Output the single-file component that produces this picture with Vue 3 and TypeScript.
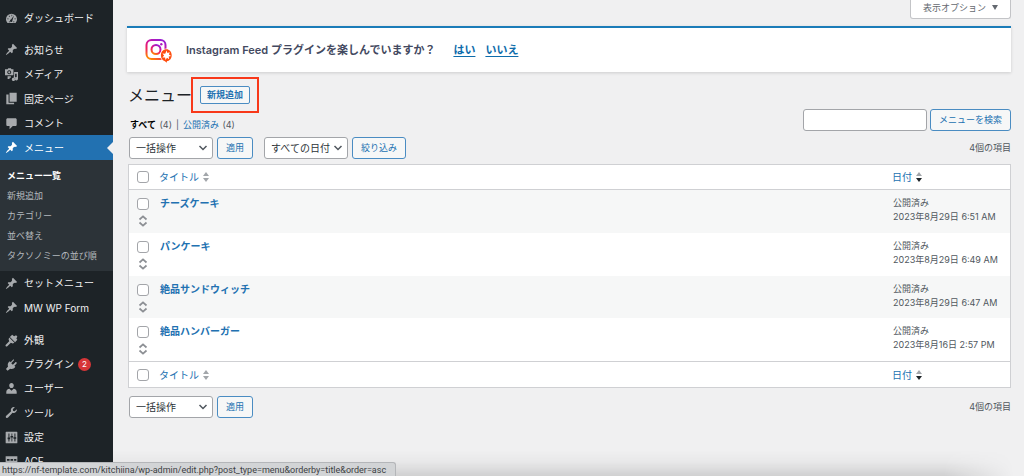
<script setup lang="ts">
import { ref } from 'vue'

type IconName = 'dashboard' | 'pin' | 'media' | 'pages' | 'comment' | 'brush' | 'plug' | 'user' | 'wrench' | 'sliders' | 'grid'
interface MenuItem { label: string; icon: IconName; current?: boolean; badge?: number }
interface Post { id: number; title: string; date: string }

const icons: Record<IconName, string> = {
  dashboard: 'M3.8 17A8.5 8.5 0 1 1 16.2 17zM10 4.2v2.2h1V4.2zM5.6 6l1.3 1.5.8-.7L6.4 5.300zM3.500 10v1.200h2V10zM14.500 10v1.200h2V10zM13.800 5.500l-4.500 6.200a1.800 1.800 0 1 0 2 1.200zM6 14.500v1.200h2v-1.200zM12.500 14.500v1.200h2v-1.200z',
  pin: 'M10.44 3.02l1.820-1.820 6.360 6.350-1.830 1.820c-1.050-.680-2.480-.570-3.410.360l-.750.750c-.920.930-1.040 2.350-.350 3.410l-1.830 1.820-2.410-2.410-2.800 2.790c-.420.420-3.380 2.710-3.800 2.290s1.860-3.390 2.280-3.810l2.790-2.790L4.100 9.360l1.830-1.820c1.050.690 2.480.570 3.400-.360l.750-.750c.930-.920 1.050-2.350.360-3.410z',
  media: 'M2 2h2l1-1.500h4L10 2h3v9H0V2zM6.500 3.500a3 3 0 1 0 .01 0zM6.500 5a1.500 1.500 0 1 1-.01 0zM14 6h6v10.500a2.500 2.500 0 1 1-2-2.400V9h-2.500v8.500a2.500 2.500 0 1 1-2-2.400V12.500H14zM4 12.500h5V15H7v2H4z',
  pages: 'M7 1h11v14H7zM2 4h3.500v12.500H14V19H2z',
  comment: 'M4 2h12c1.100 0 2 .900 2 2v8c0 1.100-.900 2-2 2h-4l-5 5v-5H4c-1.100 0-2-.900-2-2V4c0-1.100.900-2 2-2z',
  brush: 'M11 1l3 2.500L17 2l2 2-1.500 3L19 9l-3.500 3.500-8-8zM6.500 5.500l8 8-2.500 1-3-1-5.500 5.200c-1.500 1.500-3.700-.700-2.200-2.200L6.500 11l-1-3z',
  plug: 'M13.100 4.400L9.600 7.900l2.500 2.500 3.500-3.500c1.600-1.600 3.400.500 2 1.900l-3.200 3.200 1.500 1.500c-1.700 3-5.100 4.200-7.900 3L4 19.500 1.500 17l3.200-3.900C3.500 10.300 4.600 6.800 7.500 5.100l1.200 1.300 3.200-3.300c1.500-1.600 3 .100 1.200 1.300z',
  user: 'M10 9.300c-2.300 0-3.500-1.800-3.500-4C6.500 3 8 1.500 10 1.500S13.500 3 13.500 5.300c0 2.200-1.200 4-3.500 4zM6.800 10.200L10 13.500l3.200-3.300c2.800.300 4.800 2.300 4.800 5V18H2v-2.800c0-2.700 2-4.700 4.800-5z',
  wrench: 'M16.700 9.300c-1.400 1.400-3.400 1.700-5.100.9l-6.900 7.600c-.900 1-2.200.8-2.900.1-.800-.8-.800-2 .1-2.800l7.500-6.900c-.800-1.700-.500-3.700.9-5.100 1.300-1.300 3.100-1.700 4.700-1.100l-3 3 .5 2.500 2.500.5 2.900-2.900c.700 1.500.2 2.900-1.200 4.200z',
  sliders: 'M2 1h16c.6 0 1 .4 1 1v16c0 .6-.4 1-1 1H2c-.6 0-1-.4-1-1V2c0-.6.4-1 1-1zM5.300 4v6H4v2.500h1.300V16h1.500v-3.500H8V10H6.800V4zM10 4v3.500H8.500V10H10v6h1.200v-6h1.300V7.500h-1.300V4zM14.500 4v5.500H13V12h1.500v4H16v-4h1.300V9.500H16V4z',
  grid: 'M1 2h18v16H1zM3 6v3h4V6zM8.500 6v3h4V6zM14 6v3h3.500V6zM3 11v2h4v-2zM8.500 11v2h4v-2zM14 11v2h3.500v-2z',
}

const home: MenuItem[] = [{ label: 'ダッシュボード', icon: 'dashboard' }]
const content: MenuItem[] = [
  { label: 'お知らせ', icon: 'pin' },
  { label: 'メディア', icon: 'media' },
  { label: '固定ページ', icon: 'pages' },
  { label: 'コメント', icon: 'comment' },
  { label: 'メニュー', icon: 'pin', current: true },
  { label: 'セットメニュー', icon: 'pin' },
  { label: 'MW WP Form', icon: 'pin' },
]
const settings: MenuItem[] = [
  { label: '外観', icon: 'brush' },
  { label: 'プラグイン', icon: 'plug', badge: 2 },
  { label: 'ユーザー', icon: 'user' },
  { label: 'ツール', icon: 'wrench' },
  { label: '設定', icon: 'sliders' },
  { label: 'ACF', icon: 'grid' },
]
const groups = [
  { name: 'home', items: home },
  { name: 'content', items: content },
  { name: 'settings', items: settings },
]
const submenu = ['メニュー一覧', '新規追加', 'カテゴリー', '並べ替え', 'タクソノミーの並び順']

const posts: Post[] = [
  { id: 1, title: 'チーズケーキ', date: '2023年8月29日 6:51 AM' },
  { id: 2, title: 'パンケーキ', date: '2023年8月29日 6:49 AM' },
  { id: 3, title: '絶品サンドウィッチ', date: '2023年8月29日 6:47 AM' },
  { id: 4, title: '絶品ハンバーガー', date: '2023年8月16日 2:57 PM' },
]
const selected = ref<number[]>([])
const search = ref('')

function toggleAll(event: Event) {
  selected.value = (event.target as HTMLInputElement).checked ? posts.map((p) => p.id) : []
}
</script>

<template>
  <div class="admin">
    <nav class="sidebar" aria-label="管理メニュー">
      <ul v-for="group in groups" :key="group.name" class="group" :class="group.name">
        <li v-for="item in group.items" :key="item.label" class="entry">
          <a href="#" class="item" :class="{ current: item.current }">
            <svg class="icon" viewBox="0 0 20 20" aria-hidden="true"><path fill-rule="evenodd" :d="icons[item.icon]" /></svg>
            <span>{{ item.label }}</span>
            <span v-if="item.badge" class="badge">{{ item.badge }}</span>
          </a>
          <ul v-if="item.current" class="submenu">
            <li v-for="(sub, i) in submenu" :key="sub"><a href="#" :class="{ here: i === 0 }">{{ sub }}</a></li>
          </ul>
        </li>
      </ul>
    </nav>

    <main class="content-area">
      <div class="screen-meta">
        <button type="button" class="screen-options">表示オプション <span class="caret"></span></button>
      </div>

      <section class="notice">
        <svg class="insta" viewBox="-1 -2 29 28" aria-hidden="true">
          <defs>
            <linearGradient id="insta-g" x1="0.2" y1="1" x2="0.7" y2="0">
              <stop offset="0" stop-color="#ff8a00" />
              <stop offset="0.35" stop-color="#f0245c" />
              <stop offset="0.7" stop-color="#d0149c" />
              <stop offset="1" stop-color="#9a1fd0" />
            </linearGradient>
          </defs>
          <rect x="1.500" y="2" width="19" height="19" rx="5" fill="none" stroke="url(#insta-g)" stroke-width="2" />
          <circle cx="11" cy="11.500" r="4.500" fill="none" stroke="url(#insta-g)" stroke-width="2" />
          <circle cx="16.300" cy="6.200" r="1.200" fill="#b01cc0" />
          <ellipse cx="21.300" cy="17.300" rx="6.200" ry="6.700" fill="#fff" />
          <path d="M21.300 11.300c3.100 0 5.400 2.600 5.400 5.900s-2.100 5.700-4.900 6l.2 1.500-2.500-1.700c-2.200-.7-3.600-3-3.600-5.800 0-3.300 2.300-5.900 5.400-5.900z" fill="#fe4d0e" />
          <path d="M21.600 12.600l.8 2.500 2.400-.8-.9 2.300 2.200 1.300-2.400.7.5 2.600-2.200-1.400-1.500 2.200-.4-2.600-2.700.2 1.700-2-1.700-2 2.800.1z" fill="#fff" />
        </svg>
        <strong class="question">Instagram Feed プラグインを楽しんでいますか？</strong>
        <a href="#" class="answer">はい</a>
        <a href="#" class="answer">いいえ</a>
      </section>

      <header class="heading">
        <h1>メニュー</h1>
        <span class="highlight"><a href="#" class="add">新規追加</a></span>
      </header>

      <div class="filters">
        <ul class="views">
          <li><a href="#" class="all">すべて</a> (4)</li>
          <li class="bar">|</li>
          <li><a href="#">公開済み</a> (4)</li>
        </ul>
        <form class="search" @submit.prevent>
          <input v-model="search" type="search" class="field" aria-label="メニューを検索" />
          <button type="submit" class="btn">メニューを検索</button>
        </form>
      </div>

      <div class="tablenav top">
        <span class="select-wrap">
          <select class="select" aria-label="一括操作を選択"><option>一括操作</option></select>
          <svg class="chevron" viewBox="0 0 10 6" aria-hidden="true"><path d="M1.500 1L5 4.500 8.500 1" /></svg>
        </span>
        <button type="button" class="btn apply">適用</button>
        <span class="select-wrap">
          <select class="select" aria-label="日付で絞り込む"><option>すべての日付</option></select>
          <svg class="chevron" viewBox="0 0 10 6" aria-hidden="true"><path d="M1.500 1L5 4.500 8.500 1" /></svg>
        </span>
        <button type="button" class="btn">絞り込み</button>
        <span class="count">4個の項目</span>
      </div>

      <table class="list">
        <colgroup><col class="c-check" /><col /><col class="c-date" /></colgroup>
        <component :is="part" v-for="part in ['thead', 'tfoot']" :key="part">
          <tr>
            <td class="check"><input type="checkbox" class="box" aria-label="すべて選択" @change="toggleAll" /></td>
            <th scope="col"><a href="#" class="sort">タイトル
              <svg viewBox="0 0 6 12" aria-hidden="true"><path d="M3 1l3 4H0zM3 11L0 7h6z" fill="#a2a6aa" /></svg></a></th>
            <th scope="col" class="date-head"><a href="#" class="sort">日付
              <svg viewBox="0 0 6 12" aria-hidden="true"><path d="M3 1l3 4H0z" fill="#a2a6aa" /><path d="M3 11L0 7h6z" fill="#1d2327" /></svg></a></th>
          </tr>
        </component>
        <tbody>
          <tr v-for="post in posts" :key="post.id">
            <td class="check">
              <input v-model="selected" type="checkbox" class="box" :value="post.id" :aria-label="post.title + 'を選択'" />
              <svg class="handle" viewBox="0 0 10 12" aria-hidden="true"><path d="M1.500 4.500L5 1.300l3.500 3.200M1.500 7.500L5 10.700l3.500-3.200" /></svg>
            </td>
            <td class="title"><a href="#">{{ post.title }}</a></td>
            <td class="date">公開済み<br />{{ post.date }}</td>
          </tr>
        </tbody>
      </table>

      <div class="tablenav bottom">
        <span class="select-wrap">
          <select class="select" aria-label="一括操作を選択"><option>一括操作</option></select>
          <svg class="chevron" viewBox="0 0 10 6" aria-hidden="true"><path d="M1.500 1L5 4.500 8.500 1" /></svg>
        </span>
        <button type="button" class="btn">適用</button>
        <span class="count">4個の項目</span>
      </div>
    </main>

    <div class="shade"></div>
    <div class="status">https://nf-template.com/kitchiina/wp-admin/edit.php?post_type=menu&amp;orderby=title&amp;order=asc</div>
  </div>
</template>

<style>
body {
  margin: 0;
  background: #f0f0f1;
}
</style>

<style scoped>
* {
  box-sizing: border-box;
}
.admin {
  display: flex;
  height: 100vh;
  overflow: hidden;
  font: 9px/14px Inter, "Noto Sans CJK JP", sans-serif;
  color: #50575e;
  background: #f0f0f1;
}
ul {
  margin: 0;
  padding: 0;
  list-style: none;
}
a {
  color: #2271b1;
  text-decoration: none;
}
button, input, select {
  margin: 0;
  font-family: inherit;
}

.sidebar {
  flex: 0 0 113px;
  background: #1d2327;
}
.home {
  padding-top: 6px;
}
.content {
  padding-top: 7px;
}
.settings {
  padding-top: 8px;
}
.item {
  display: flex;
  align-items: center;
  position: relative;
  height: 24px;
  padding-left: 5px;
  color: #f0f0f1;
  font-size: 10px;
  white-space: nowrap;
}
.content .entry:nth-child(odd) > .item,
.settings .entry:nth-child(4) > .item {
  height: 25px;
}
.icon {
  width: 13px;
  height: 13px;
  margin-right: 6px;
  fill: #a7aaad;
}
.current {
  background: #2271b1;
  color: #fff;
}
.current .icon {
  fill: #fff;
}
.current::after {
  content: "";
  position: absolute;
  right: 0;
  top: 7px;
  border: 6px solid transparent;
  border-left-width: 0;
  border-right-color: #f0f0f1;
}
.badge {
  min-width: 13px;
  margin-left: 4px;
  border-radius: 7px;
  background: #d63638;
  color: #fff;
  font-size: 8px;
  line-height: 13px;
  text-align: center;
}
.submenu {
  padding: 6px 0 5px 7px;
  background: #2c3338;
}
.submenu a {
  display: block;
  color: #b4b9be;
  line-height: 20px;
  white-space: nowrap;
}
.submenu .here {
  color: #fff;
  font-weight: 700;
}

.content-area {
  flex: 1;
  min-width: 0;
  padding: 0 13px 0 15px;
}
.screen-meta {
  display: flex;
  justify-content: flex-end;
}
.screen-options {
  display: flex;
  align-items: center;
  gap: 6px;
  height: 19px;
  padding: 0 12px 3px;
  border: 1px solid #c3c4c7;
  border-top: 0;
  border-radius: 0 0 3px 3px;
  background: #fff;
  color: #646970;
  font-size: 9px;
}
.caret {
  border: 3px solid transparent;
  border-top: 5px solid #646970;
  border-bottom: 0;
}
.notice {
  display: flex;
  align-items: center;
  height: 46px;
  margin: 7px 0 0 -1px;
  padding: 0 17px;
  border-top: 2px solid #1b7cb8;
  background: #fff;
  box-shadow: 0 1px 3px rgba(0, 0, 0, 0.15);
}
.insta {
  width: 29px;
  height: 28px;
  margin-right: 13px;
}
.question {
  margin-right: 18px;
  color: #434960;
  font-size: 11px;
  font-weight: 600;
}
.answer {
  margin-right: 10px;
  color: #0e6cab;
  font-size: 11px;
  font-weight: 700;
  text-decoration: underline;
  text-underline-offset: 2px;
}
.heading {
  display: flex;
  align-items: center;
  height: 36px;
  margin-top: 5px;
}
h1 {
  margin: 0;
  color: #1d2327;
  font-size: 16px;
  font-weight: 400;
  line-height: 24px;
}
.highlight {
  margin-left: -1px;
  padding: 7px;
  border: 2px solid #f8381a;
}
.add {
  display: block;
  padding: 0 6px;
  border: 1px solid #4a8cc2;
  border-radius: 2px;
  background: #f6f7f7;
  font-weight: 600;
  line-height: 16px;
}
.filters {
  display: flex;
  justify-content: space-between;
  height: 24px;
}
.views {
  display: flex;
  gap: 4px;
  padding: 5px 0 0 2px;
}
.views a {
  margin-right: 1px;
}
.views .all {
  color: #000;
  font-weight: 700;
}
.search {
  display: flex;
  align-items: flex-start;
  gap: 3px;
}
.filters .search {
  margin-top: -4px;
}
.field, .select, .btn {
  height: 22px;
  border-radius: 3px;
}
.field {
  width: 124px;
  border: 1px solid #a3a5a9;
  background: #fff;
  padding: 0 5px;
  font-size: 9px;
  outline: none;
  appearance: none;
}
.btn {
  padding: 0 8px;
  border: 1px solid #4a8cc2;
  background: #f6f7f7;
  color: #2271b1;
  font-size: 9px;
  line-height: 14px;
}
.tablenav {
  display: flex;
  align-items: center;
  gap: 4px;
  padding-left: 1px;
}
.top {
  margin-bottom: 5px;
}
.bottom {
  margin-top: 8px;
}
.apply {
  margin-right: 7px;
}
.select-wrap {
  display: grid;
  align-items: center;
}
.select {
  grid-area: 1 / 1;
  width: 84px;
  border: 1px solid #a3a5a9;
  background: #fff;
  color: #2c3338;
  padding: 0 6px;
  font-size: 10px;
  appearance: none;
}
.chevron {
  grid-area: 1 / 1;
  justify-self: end;
  width: 10px;
  height: 6px;
  margin-right: 5px;
  fill: none;
  stroke: #50575e;
  stroke-width: 1.5;
  pointer-events: none;
}
.count {
  margin-left: auto;
}

.list {
  width: 100%;
  border: 1px solid #cfd0d3;
  border-collapse: separate;
  border-spacing: 0;
  background: #fff;
  table-layout: fixed;
}
.c-check {
  width: 24px;
}
.c-date {
  width: 124px;
}
td, th {
  padding: 0;
  text-align: left;
  vertical-align: top;
  font-weight: 400;
}
thead td, thead th {
  border-bottom: 1px solid #cfd0d3;
}
tfoot td, tfoot th {
  border-top: 1px solid #cfd0d3;
}
thead tr {
  height: 25px;
}
tfoot tr {
  height: 26px;
}
thead td, thead th, tfoot td, tfoot th {
  vertical-align: middle;
}
.list th {
  padding-left: 6px;
}
.sort {
  display: flex;
  align-items: center;
  gap: 4px;
  font-size: 10px;
}
.sort svg {
  width: 6px;
  height: 12px;
}
.list .check {
  padding-left: 8px;
}
.box {
  display: block;
  width: 12px;
  height: 12px;
  border: 1px solid #a3a5a9;
  border-radius: 3px;
  background: #fff;
  appearance: none;
}
.box:checked {
  background: #2271b1;
}
tbody tr {
  height: 43px;
}
tbody tr:nth-child(3) {
  height: 42px;
}
tbody tr:nth-child(odd) {
  background: #f6f7f7;
}
tbody .check {
  padding-top: 8px;
}
.handle {
  display: block;
  width: 10px;
  height: 12px;
  margin: 5px 0 0 1px;
  fill: none;
  stroke: #8c8f94;
  stroke-width: 1.7;
}
.list .title {
  padding: 6px 7px 0;
  font-size: 10px;
  font-weight: 600;
}
.list .date {
  padding: 6px 0 0 7px;
  white-space: nowrap;
}

.shade {
  position: fixed;
  right: 0;
  bottom: 0;
  left: 113px;
  height: 26px;
  background: linear-gradient(to bottom, transparent, rgba(0, 0, 0, 0.03) 45%, rgba(0, 0, 0, 0.13));
  mask-image: linear-gradient(to left, transparent 10px, #000 80px);
  pointer-events: none;
}
.status {
  position: fixed;
  bottom: 0;
  left: 0;
  height: 14px;
  padding: 0 9px 0 2px;
  border: 1px solid #b4b6b9;
  border-width: 1px 1px 0 0;
  border-radius: 0 3px 0 0;
  background: #d2d4d6;
  color: #3c4043;
  font-family: Roboto, sans-serif;
  font-size: 9px;
  line-height: 14px;
  white-space: nowrap;
}
</style>
